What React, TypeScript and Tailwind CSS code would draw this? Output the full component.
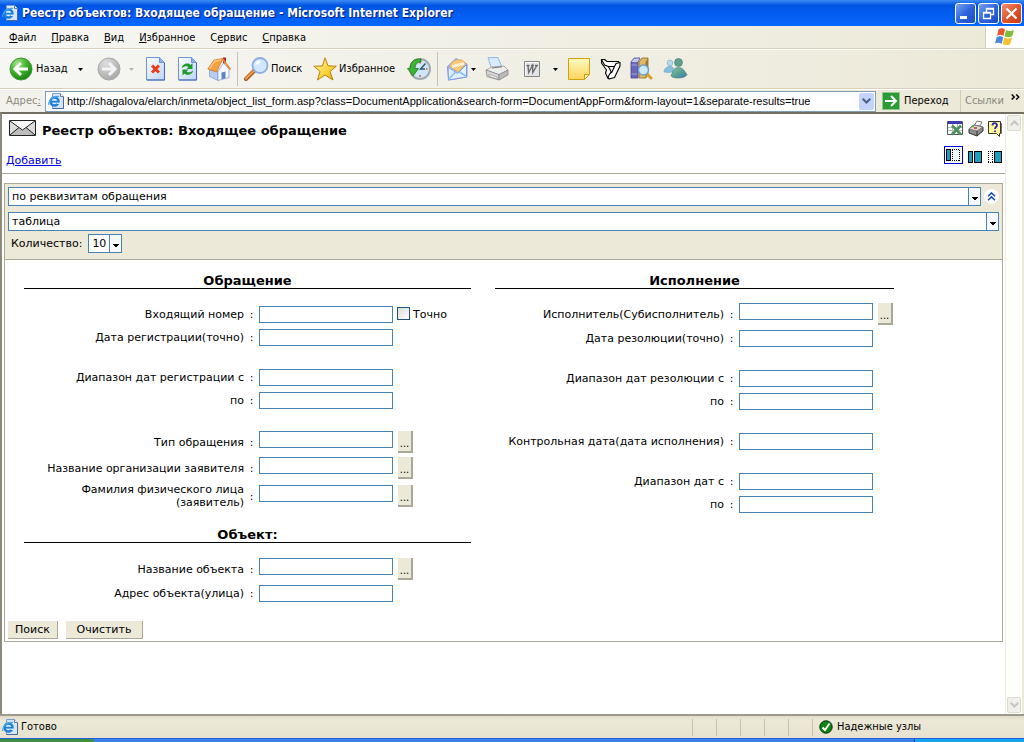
import React, { useState } from "react";

const tahoma = "font-['DejaVu_Sans_Condensed','DejaVu_Sans',sans-serif] text-[11px] leading-[14px]";
const verdana = "font-['DejaVu_Sans',sans-serif] text-[11px] leading-[13px]";

function Caret({ muted = false }: { muted?: boolean }) {
  return (
    <svg width="5" height="3" viewBox="0 0 5 3" className={muted ? "shrink-0 text-[#b9b7ab]" : "shrink-0 text-black"} aria-hidden="true">
      <path d="M0 0h5L2.500 3z" fill="currentColor" />
    </svg>
  );
}

function PageIcon() {
  return (
    <svg width="16" height="16" viewBox="0 0 16 16" className="shrink-0" aria-hidden="true">
      <path d="M4.500.5h8l3 3v12h-11z" fill="#d5e6fb" stroke="#7c9fd0" />
      <path d="M12.500.5v3h3" fill="#fff" stroke="#5b7fb5" />
      <path d="M15.500 4v11.500h-11" fill="none" stroke="#4a66a0" />
      <circle cx="6.500" cy="8.500" r="4" fill="#d8efff" stroke="#1d7fd6" strokeWidth="2.400" />
      <path d="M3 8.700h8" stroke="#1d7fd6" strokeWidth="1.800" />
      <path d="M9 10.300h3" stroke="#d5e6fb" strokeWidth="1.400" />
      <path d="M1 12C-.5 9 4 3 11 3.500" fill="none" stroke="#4aa5ea" strokeWidth="1.200" />
    </svg>
  );
}

function BackIcon() {
  return (
    <svg width="24" height="24" viewBox="0 0 24 24" aria-hidden="true">
      <defs>
        <radialGradient id="gback" cx=".35" cy=".25" r=".85">
          <stop offset="0" stopColor="#a4e58c" />
          <stop offset=".5" stopColor="#3fb02a" />
          <stop offset="1" stopColor="#15780e" />
        </radialGradient>
      </defs>
      <circle cx="12" cy="12" r="11" fill="url(#gback)" stroke="#3f9b35" />
      <path d="M19 12H6.500M12 6l-6 6 6 6" fill="none" stroke="#fff" strokeWidth="3" />
    </svg>
  );
}

function ForwardIcon() {
  return (
    <svg width="24" height="24" viewBox="0 0 24 24" aria-hidden="true">
      <defs>
        <radialGradient id="gfwd" cx=".35" cy=".25" r=".85">
          <stop offset="0" stopColor="#dedede" />
          <stop offset="1" stopColor="#a3a3a3" />
        </radialGradient>
      </defs>
      <circle cx="12" cy="12" r="11" fill="url(#gfwd)" stroke="#a9a9a9" />
      <path d="M5 12h12.500M12 6l6 6-6 6" fill="none" stroke="#f4f4f4" strokeWidth="3" />
    </svg>
  );
}

function Sheet({ children }: { children: React.ReactNode }) {
  return (
    <svg width="20" height="24" viewBox="0 0 20 24" aria-hidden="true">
      <defs>
        <linearGradient id="gsheet" x1="0" y1="0" x2="1" y2="1">
          <stop offset="0" stopColor="#fff" />
          <stop offset="1" stopColor="#bcd3f8" />
        </linearGradient>
      </defs>
      <path d="M.5.5h13l5 5v17.500H.5z" fill="url(#gsheet)" stroke="#6f93d6" />
      <path d="M13.500.5v5h5" fill="#8bb0ee" stroke="#6f93d6" />
      <path d="M18.500 6v17H1" fill="none" stroke="#4468b4" />
      {children}
    </svg>
  );
}

function HomeIcon() {
  return (
    <svg width="24" height="24" viewBox="0 0 24 24" aria-hidden="true">
      <path d="M16 .5h3v6h-3z" fill="#b5222c" />
      <path d="M2.500 12.500l8.500 2V23.500l-8.500-4z" fill="#b9cdf0" stroke="#7c98cc" strokeWidth=".7" />
      <path d="M11 14.500L16.500 6l5.500 6v8.500l-11 3z" fill="#f5f9ff" stroke="#7c98cc" strokeWidth=".7" />
      <path d="M14.500 15.500l4-1v6.800l-4 1z" fill="#5b82c4" />
      <path d="M.8 12L7 3l9-1.500L9.500 15z" fill="#f6a040" stroke="#ce6f1c" strokeWidth=".7" />
      <path d="M2.500 11.500L8 4l6-1" fill="none" stroke="#fbc885" strokeWidth="1.500" />
      <path d="M16 2.500l7 9.500" stroke="#e88a3a" strokeWidth="1.800" strokeLinecap="round" />
    </svg>
  );
}

function SearchIcon() {
  return (
    <svg width="25" height="24" viewBox="0 0 25 24" aria-hidden="true">
      <path d="M2 22l8-8" stroke="#9b5b22" strokeWidth="4" strokeLinecap="round" />
      <path d="M2 21.500l7-7" stroke="#f49b4a" strokeWidth="2.200" strokeLinecap="round" />
      <circle cx="16" cy="8.500" r="7.500" fill="#cfe8ff" stroke="#8fabe6" strokeWidth="1.800" />
      <path d="M11 8a5.500 5.500 0 0 1 6-4.500c-1 3-3 4-6 4.500z" fill="#fff" />
    </svg>
  );
}

function StarIcon() {
  return (
    <svg width="24" height="24" viewBox="0 0 24 24" aria-hidden="true">
      <defs>
        <linearGradient id="gstar" x1="0" y1="0" x2="1" y2="1">
          <stop offset="0" stopColor="#fff6a8" />
          <stop offset=".6" stopColor="#fbd23a" />
          <stop offset="1" stopColor="#e2a010" />
        </linearGradient>
      </defs>
      <path d="M12 .8l3 8 8.300.4-6.300 5.300 3 8.500L12 18l-7.500 5L7 14.500.8 9.200 9.300 9z" fill="url(#gstar)" stroke="#b98410" strokeLinejoin="round" />
    </svg>
  );
}

function HistoryIcon() {
  return (
    <svg width="24" height="24" viewBox="0 0 24 24" aria-hidden="true">
      <circle cx="13" cy="12" r="10" fill="#cfe6f8" stroke="#a2a8b0" strokeWidth="2" />
      <path d="M13 5v1.500M13 18v2M20.500 12H19" stroke="#e05a30" strokeWidth="1.500" />
      <path d="M18.500 6.500L13.500 12H18" fill="none" stroke="#35557f" strokeWidth="1.400" />
      <path d="M14 2C7 1.500 3 5 3.500 11L.5 11.500 6 19l5.500-7.500H8C8 7.500 10 5 14 5z" fill="#3db336" stroke="#1c7a18" strokeWidth=".8" />
    </svg>
  );
}

function MailIcon() {
  return (
    <svg width="24" height="24" viewBox="0 0 24 24" aria-hidden="true">
      <path d="M1.500 9.500L10 1.500l11 5.500v13L2.500 23z" fill="#a9c6f5" stroke="#8f9fdc" />
      <path d="M4 9.500C5 2 18 0 19.500 7l-7.500 8z" fill="#fbc877" stroke="#e0a860" strokeWidth=".8" />
      <path d="M6 9.500l12-3" stroke="#fff3dc" strokeWidth="2.500" />
      <path d="M2 10l9.500 6.500 9-9V20L2.500 23z" fill="#dff1ff" stroke="#7f9ae0" />
      <path d="M2.500 22.500l7-7.500M20.500 19.500L13.500 15" stroke="#84c0ee" strokeWidth="1.500" />
    </svg>
  );
}

function PrinterIcon() {
  return (
    <svg width="24" height="24" viewBox="0 0 24 24" aria-hidden="true">
      <path d="M3 .7l10-.2 4 10-10 2z" fill="#d9eaff" stroke="#8fb4ea" />
      <path d="M1 13l6-3 12-1 4 4-9 5z" fill="#eeeeee" stroke="#999" strokeWidth=".8" />
      <path d="M1 13l13 4.500V23L2 19.500z" fill="#d5d5d5" stroke="#888" strokeWidth=".8" />
      <path d="M14 17.500l9-4.500v5l-9 5z" fill="#b9b9b9" stroke="#888" strokeWidth=".8" />
      <path d="M4 17.500l8 2.500v1.800l-8-2.500z" fill="#fff" stroke="#777" strokeWidth=".5" />
      <path d="M7 11l10-1.200" stroke="#777" />
    </svg>
  );
}

function WordIcon() {
  return (
    <svg width="16" height="16" viewBox="0 0 16 16" aria-hidden="true">
      <path d="M.5.5h15v15H.5z" fill="#e4e4e4" stroke="#858585" />
      <path d="M1.500 14.500v-13h13" fill="none" stroke="#fff" />
      <path d="M2.500 4.500h3M7 4.500h3M11 4.500h3M4 4.500l.7 7 3.800-7 .3 7L12.800 4.500" fill="none" stroke="#6d6d6d" strokeWidth="1.400" />
    </svg>
  );
}

function NoteIcon() {
  return (
    <svg width="22" height="22" viewBox="0 0 22 22" aria-hidden="true">
      <defs>
        <linearGradient id="gnote" x1="0" y1="0" x2="0" y2="1">
          <stop offset="0" stopColor="#fffbc0" />
          <stop offset="1" stopColor="#ffd35c" />
        </linearGradient>
      </defs>
      <path d="M.5.5h21v16l-5 5H.5z" fill="url(#gnote)" stroke="#d2a010" />
      <path d="M21.500 16.500h-5v5z" fill="#fff0a0" stroke="#d2a010" />
    </svg>
  );
}

function TrackIcon() {
  return (
    <svg width="22" height="22" viewBox="0 0 22 22" aria-hidden="true" strokeLinejoin="round">
      <path d="M1.500 1.500h3L6 4l5 9.500-1 5.500-2 1.500L5.500 15l1-3L1.500 5z" fill="#fff" stroke="#000" strokeWidth="1.100" />
      <path d="M1.500 1.500h3L7 3.500h11.500l1 2-2 3H8.500L4.500 7z" fill="#fff" stroke="#000" strokeWidth="1.100" />
      <path d="M16 5.500l4-1v3.500L14.500 19.500 9 21l-1-2 2-3.500 2-1.500 2.500-5.500z" fill="#fff" stroke="#000" strokeWidth="1.100" />
    </svg>
  );
}

function BooksIcon() {
  return (
    <svg width="23" height="24" viewBox="0 0 23 24" aria-hidden="true">
      <path d="M1 5l3-4h6L8 5v16H1z" fill="#6a68b8" stroke="#45438c" strokeWidth=".8" />
      <path d="M1.500 5L4 1.500h5.500L7.500 5z" fill="#c9c8ec" />
      <path d="M1.500 8h6M1.500 17h6" stroke="#a6a4dc" />
      <path d="M9 5l3-4h6v17l-2 3H9z" fill="#e0b863" stroke="#8d6a20" strokeWidth=".8" />
      <path d="M15.500 5L18 1.500V17l-2.500 3z" fill="#9c7633" />
      <path d="M16.500 16.500l4.500 4.500" stroke="#d8a030" strokeWidth="3" strokeLinecap="round" />
      <circle cx="13.500" cy="13" r="5" fill="#cfeaff" stroke="#6f9fd4" strokeWidth="1.400" />
    </svg>
  );
}

function MessengerIcon() {
  return (
    <svg width="25" height="24" viewBox="0 0 25 24" aria-hidden="true">
      <defs>
        <linearGradient id="gmsn" x1="0" y1="0" x2="1" y2="1">
          <stop offset="0" stopColor="#8cc3a6" />
          <stop offset=".5" stopColor="#5aa392" />
          <stop offset="1" stopColor="#3f78b8" />
        </linearGradient>
      </defs>
      <circle cx="7" cy="6" r="2.800" fill="#b4dcee" stroke="#6aa3c0" strokeWidth=".6" />
      <path d="M1 15c0-3.500 3-5.500 6-5.500s4 2 4 5L6 15.500z" fill="#86bfe0" stroke="#6aa3c0" strokeWidth=".6" />
      <circle cx="15.500" cy="5.500" r="4" fill="#5f9f8c" stroke="#467f6c" strokeWidth=".6" />
      <path d="M8 18.500C9.500 17 9.500 10.500 15.500 10.500c5 0 6 4 8.500 7-1 2.500-5 3.500-8.500 3.500-3 0-7-.5-7.500-2.500z" fill="url(#gmsn)" stroke="#3f7d74" strokeWidth=".6" />
    </svg>
  );
}

function FlagLogo() {
  return (
    <svg width="20" height="18" viewBox="0 0 20 18" aria-hidden="true">
      <path d="M3.500 1.500C6-.3 8 .3 10 1.500L8.500 8C6.500 6.500 4.500 6.500 2 7.800z" fill="#e8562a" />
      <path d="M11 2c2.500 1.200 5 1.300 8 0l-1.800 6.300c-2.800 1.500-5 1.200-7.700 0z" fill="#7cbb3c" />
      <path d="M1.700 9c2.600-1.200 4.600-1 6.600.3L6.700 15.800C4.700 14.500 2.500 14.500 0 15.500z" fill="#4a86dc" />
      <path d="M9.300 9.500c2.700 1.300 5 1.300 7.700 0l-1.800 6.700c-2.700 1.300-5 1.200-7.500-.2z" fill="#f5c02c" />
    </svg>
  );
}

function ToolButton({ label, className, children }: { label: string; className: string; children: React.ReactNode }) {
  return (
    <button type="button" aria-label={label} className={"flex h-full shrink-0 items-center " + className}>
      {children}
    </button>
  );
}

function MenuItem({ text, mark = 0 }: { text: string; mark?: number }) {
  return (
    <button type="button" className="pt-px pr-2 pl-[7px]">
      {text.slice(0, mark)}
      <u>{text[mark]}</u>
      {text.slice(mark + 1)}
    </button>
  );
}

function Combo({ label, id, options, className }: { label: string; id: string; options: string[]; className: string }) {
  return (
    <div className={"grid h-[19px] border border-[#4682b4] bg-white " + className}>
      <select id={id} aria-label={label} className="col-start-1 row-start-1 w-full min-w-0 appearance-none bg-white pl-[3px] outline-none">
        {options.map((o) => (
          <option key={o}>{o}</option>
        ))}
      </select>
      <span className="pointer-events-none col-start-1 row-start-1 flex w-3 items-center justify-center justify-self-end border-l border-[#4682b4] bg-[#f8f8ff] pt-1">
        <svg width="6" height="3" viewBox="0 0 6 3" aria-hidden="true">
          <path d="M0 0h6v1H5v1H4v1H2V2H1V1H0z" />
        </svg>
      </span>
    </div>
  );
}

type FieldProps = { id: string; label: React.ReactNode; lookup?: boolean; tall?: boolean; narrow?: boolean; children?: React.ReactNode };

function Field({ id, label, lookup, tall, narrow, children }: FieldProps) {
  const height = tall ? "h-[30px]" : lookup ? "h-[26px]" : "h-[23px]";
  return (
    <div className={"flex items-center " + height}>
      <label htmlFor={id} className="flex-1 text-right">
        {label}
      </label>
      <span className="w-[15px] text-center">:</span>
      <div className={"flex items-start " + (narrow ? "w-[155px]" : "w-[212px]")}>
        <input id={id} type="text" className="h-[17px] w-[134px] border border-[#4682b4] bg-white px-1 outline-none" />
        {lookup && (
          <button type="button" aria-label="Выбрать" className="ml-[5px] h-[22px] w-[15px] border-r-2 border-b-2 border-[#aca899] bg-[#ece9d8] pt-1 text-[10px]">
            ...
          </button>
        )}
        {children}
      </div>
    </div>
  );
}

function Section({ title, children }: { title: string; children: React.ReactNode }) {
  return (
    <section>
      <h2 className="border-b border-black text-center text-[13px] leading-[15px] font-bold">{title}</h2>
      {children}
    </section>
  );
}

function TopIcons() {
  return (
    <div className="flex flex-col items-end gap-[9px] pt-[6px] pr-[2px]">
      <div className="flex gap-1">
        <button type="button" aria-label="Excel">
          <svg width="17" height="17" viewBox="0 0 17 17" aria-hidden="true">
            <path d="M.5 1.500h15v13H.5z" fill="#fff" stroke="#555" />
            <path d="M1 1h14v3H1z" fill="#3b3bb0" />
            <path d="M1 7.500h14M1 10.500h14M5.500 4v10M10.500 4v10" stroke="#b4c0b4" />
            <path d="M5 5.500l9 9M14 5.500l-9 9" stroke="#4e9160" strokeWidth="2.600" />
          </svg>
        </button>
        <button type="button" aria-label="Печать">
          <svg width="16" height="17" viewBox="0 0 16 17" aria-hidden="true">
            <path d="M6 6l3-5 5 1-3 6z" fill="#fff" stroke="#777" />
            <path d="M1 9l5-4 9 2v4l-6 5-8-3z" fill="#8c8c8c" stroke="#333" />
            <path d="M1 9l5-4 9 2-6 4z" fill="#dcdcdc" stroke="#777" />
            <path d="M9 11v5" stroke="#333" />
            <path d="M6 8h3" stroke="#d22" strokeWidth="1.500" />
            <path d="M4 6.500h2" stroke="#2c2" strokeWidth="1.500" />
          </svg>
        </button>
        <button type="button" aria-label="Справка">
          <svg width="15" height="17" viewBox="0 0 15 17" aria-hidden="true">
            <path d="M13.500 3v10.500h-1" fill="none" stroke="#777" />
            <path d="M.5 1.500h12v12h-1v3l-3-3h-8z" fill="#fff99a" stroke="#333" />
            <path d="M4.500 5.500C4.500 2.500 9 2.500 9 5.300c0 1.700-2 1.700-2 3.700M7 10.500v1.500" fill="none" stroke="#2626b8" strokeWidth="1.800" />
          </svg>
        </button>
      </div>
      <div className="flex items-end gap-[5px]">
        <button type="button" aria-label="Только форма" className="border border-[#0000e0] p-px">
          <svg width="15" height="14" viewBox="0 0 15 14" shapeRendering="crispEdges" aria-hidden="true">
            <path d="M0 0h15v14H0z" fill="#eef6fc" />
            <path d="M.5 1.500h4v11h-4z" fill="#1ca0c0" stroke="#000" />
            <path d="M6 1.500h8M6 12.500h8M6.500 2v11M13.500 2v11" fill="none" stroke="#000" strokeDasharray="1 1" />
          </svg>
        </button>
        <button type="button" aria-label="Форма и результаты" className="pb-px">
          <svg width="15" height="12" viewBox="0 0 15 12" shapeRendering="crispEdges" aria-hidden="true">
            <path d="M.5.5h4v11h-4zM6.500.5h7v11h-7z" fill="#1ca0c0" stroke="#000" />
          </svg>
        </button>
        <button type="button" aria-label="Только результаты" className="pb-px">
          <svg width="15" height="12" viewBox="0 0 15 12" shapeRendering="crispEdges" aria-hidden="true">
            <path d="M0 .5h5M0 11.500h5M.5 0v12M4.500 0v12" fill="none" stroke="#000" strokeDasharray="1 1" />
            <path d="M6.500.5h7v11h-7z" fill="#1ca0c0" stroke="#000" />
          </svg>
        </button>
      </div>
    </div>
  );
}

function ScrollButton({ up = false }: { up?: boolean }) {
  return (
    <button type="button" aria-label={up ? "Вверх" : "Вниз"} className="flex h-4 w-full items-center justify-center rounded-[2px] border border-[#dcdccd] bg-[#f0f0ea]">
      <svg width="9" height="6" viewBox="0 0 9 6" aria-hidden="true">
        <path d={up ? "M.7 5.300L4.500 1.500l3.800 3.800" : "M.7.7l3.800 3.800L8.300.7"} fill="none" stroke="#c6c6bb" strokeWidth="2" />
      </svg>
    </button>
  );
}

function WindowButton({ label, close, children }: { label: string; close?: boolean; children: React.ReactNode }) {
  return (
    <button
      type="button"
      aria-label={label}
      className={
        "flex h-[21px] w-[21px] items-center justify-center rounded-[3px] border border-white bg-linear-to-br " +
        (close ? "from-[#f0906e] via-[#e0532c] to-[#c83a14]" : "from-[#7ba2f0] via-[#2f63dc] to-[#1c4cc4]")
      }
    >
      {children}
    </button>
  );
}

export default function App() {
  const [exact, setExact] = useState(false);
  return (
    <div className={"flex h-screen flex-col overflow-hidden bg-[#ece9d8] text-black " + tahoma}>
      <header className="flex h-[26px] shrink-0 items-center bg-linear-to-b from-[#3a8cf5] via-[#0054e3] via-20% to-[#0668ff] pr-[2px] pl-[2px]">
        <PageIcon />
        <h1 className="flex-1 truncate pl-1 text-[12px] leading-5 font-bold text-white [text-shadow:1px_1px_1px_#0a1883]">
          Реестр объектов: Входящее обращение - Microsoft Internet Explorer
        </h1>
        <div className="flex gap-[2px]">
          <WindowButton label="Свернуть">
            <svg width="13" height="13" viewBox="0 0 13 13" aria-hidden="true">
              <path d="M1 9h7v3H1z" fill="#fff" />
            </svg>
          </WindowButton>
          <WindowButton label="Восстановить">
            <svg width="13" height="13" viewBox="0 0 13 13" aria-hidden="true">
              <path d="M4.500 5V1.500h7v6H9M4 2h8M1.500 5.500h7v6h-7zM1 6h8" fill="none" stroke="#fff" strokeWidth="1.300" />
            </svg>
          </WindowButton>
          <WindowButton label="Закрыть" close>
            <svg width="13" height="13" viewBox="0 0 13 13" aria-hidden="true">
              <path d="M1.500 1.500l10 10M11.500 1.500l-10 10" stroke="#fff" strokeWidth="2.200" />
            </svg>
          </WindowButton>
        </div>
      </header>

      <nav className="flex h-[23px] shrink-0 items-stretch border-b border-[#d8d2bd] bg-linear-to-r from-[#f6f6f3] to-[#ece9d8] pl-[2px]">
        <MenuItem text="Файл" />
        <MenuItem text="Правка" />
        <MenuItem text="Вид" />
        <MenuItem text="Избранное" />
        <MenuItem text="Сервис" mark={1} />
        <MenuItem text="Справка" />
        <div className="ml-auto flex w-[39px] items-center justify-center border-l border-[#d8d2bd] bg-white">
          <FlagLogo />
        </div>
      </nav>

      <div className="flex h-10 shrink-0 items-center border-t border-b border-t-white border-b-[#d8d2bd] bg-linear-to-r from-[#f6f6f3] to-[#ece9d8] pl-[9px]" role="toolbar">
        <ToolButton label="Назад" className="w-[88px]">
          <BackIcon />
          <span className="w-[45px] pl-[3px] text-left">Назад</span>
          <Caret />
        </ToolButton>
        <ToolButton label="Вперед" className="w-[49px] gap-2">
          <ForwardIcon />
          <Caret muted />
        </ToolButton>
        <ToolButton label="Остановить" className="w-8">
          <Sheet>
            <path d="M6 8.500l7 7M13 8.500l-7 7" stroke="#ee3b1c" strokeWidth="3" />
          </Sheet>
        </ToolButton>
        <ToolButton label="Обновить" className="w-[29px]">
          <Sheet>
            <path d="M4 11c0-4 6-6 8.500-3l2-2v6H8.500l2-2C9 8.500 6.500 9 4 11zM15 13.500c0 4-6 5.500-8.500 3l-2 2v-6h6l-2 2c1.500 1.500 4.500 1 6.500-1z" fill="#1e9a2a" />
          </Sheet>
        </ToolButton>
        <ToolButton label="Домой" className="w-[30px]">
          <HomeIcon />
        </ToolButton>
        <div className="h-[34px] w-[7px] shrink-0 border-l border-[#c5c2b2]" />
        <ToolButton label="Поиск" className="w-[69px] gap-[2px]">
          <SearchIcon />
          <span>Поиск</span>
        </ToolButton>
        <ToolButton label="Избранное" className="w-[94px] gap-[2px]">
          <StarIcon />
          <span>Избранное</span>
        </ToolButton>
        <ToolButton label="Журнал" className="w-[30px]">
          <HistoryIcon />
        </ToolButton>
        <div className="h-[34px] w-[9px] shrink-0 border-l border-[#c5c2b2]" />
        <ToolButton label="Почта" className="w-[39px] gap-px">
          <MailIcon />
          <Caret />
        </ToolButton>
        <ToolButton label="Печать" className="w-[39px]">
          <PrinterIcon />
        </ToolButton>
        <ToolButton label="Правка" className="w-11 gap-[13px]">
          <WordIcon />
          <Caret />
        </ToolButton>
        <ToolButton label="Заметки" className="w-8">
          <NoteIcon />
        </ToolButton>
        <ToolButton label="Маршрут" className="w-[30px]">
          <TrackIcon />
        </ToolButton>
        <ToolButton label="Справочники" className="w-[33px]">
          <BooksIcon />
        </ToolButton>
        <ToolButton label="Messenger" className="w-8">
          <MessengerIcon />
        </ToolButton>
      </div>

      <div className="flex h-[23px] shrink-0 items-center border-t border-white bg-linear-to-r from-[#f3f2ec] to-[#ece9d8]">
        <label htmlFor="address" className="w-[45px] shrink-0 pl-[6px] text-[#8a887c]">
          Адрес<u>:</u>
        </label>
        <div className="flex h-[21px] min-w-0 flex-1 items-center border border-[#7f9db9] bg-white pl-[2px]">
          <PageIcon />
          <input
            id="address"
            type="text"
            className="h-full min-w-0 flex-1 truncate bg-white pl-[3px] font-['Liberation_Sans',sans-serif] text-[11px] outline-none"
            defaultValue="http://shagalova/elarch/inmeta/object_list_form.asp?class=DocumentApplication&search-form=DocumentAppForm&form-layout=1&separate-results=true"
          />
          <button type="button" aria-label="Показать адреса" className="mr-px flex h-[17px] w-[15px] items-center justify-center rounded-[2px] bg-[#c3d3fb]">
            <svg width="9" height="6" viewBox="0 0 9 6" aria-hidden="true">
              <path d="M.7.7l3.800 3.800L8.300.7" fill="none" stroke="#4d6185" strokeWidth="2" />
            </svg>
          </button>
        </div>
        <button type="button" className="ml-[6px] flex w-[78px] shrink-0 items-center gap-1">
          <svg width="18" height="18" viewBox="0 0 18 18" aria-hidden="true">
            <path d="M.5.5h17v17H.5z" fill="#2c9a35" stroke="#8fc892" />
            <path d="M3 9h11M9 4l5 5-5 5" fill="none" stroke="#fff" strokeWidth="2" />
          </svg>
          Переход
        </button>
        <div className="flex h-full w-[64px] shrink-0 items-center justify-between border-l border-[#d0ccbc] pr-1 pl-1 text-[#8a887c]">
          <span>Ссылки</span>
          <svg width="9" height="6" viewBox="0 0 9 6" className="mb-2" aria-hidden="true">
            <path d="M.7.5L3.200 3 .7 5.500M5.200.5L7.700 3 5.200 5.500" fill="none" stroke="#000" strokeWidth="1.500" />
          </svg>
        </div>
      </div>

      <div className={"flex min-h-0 flex-1 border-t-2 border-l-2 border-t-[#716f64] border-l-[#8d8a7c] bg-white " + verdana}>
        <main className="min-w-0 flex-1 overflow-hidden">
          <div className="flex h-[60px] justify-between border-b border-[#aca899]">
            <div className="pl-1">
              <div className="flex h-8 items-center gap-[6px] pl-[3px]">
                <svg width="27" height="16" viewBox="0 0 27 16" className="mb-1" aria-hidden="true">
                  <path d="M.5.5h26v15H.5z" fill="#dcdcdc" />
                  <path d="M1 15l9-8 3.500 3L17 7l9 8z" fill="#bdbdbd" />
                  <path d="M1 1h25L13.500 10z" fill="#f7f7f7" />
                  <path d="M.5.5h26v15H.5zM1 1l12.500 9L26 1M1 15l9-7.500M26 15l-9-7.500" fill="none" stroke="#222" />
                </svg>
                <h2 className="pt-[2px] text-[13px] leading-4 font-bold">Реестр объектов: Входящее обращение</h2>
              </div>
              <a href="#add" className="mt-2 block text-[#0000e0] underline">
                Добавить
              </a>
            </div>
            <TopIcons />
          </div>

          <form className="mx-[2px] mt-[9px] mb-0 border border-[#aca899]" onSubmit={(e) => e.preventDefault()}>
            <div className="flex h-[76px] flex-col border-b border-[#aca899] bg-[#ece9d8] pt-[3px] pr-[3px] pl-[3px]">
              <div className="flex items-center">
                <Combo id="mode" label="Вид поиска" className="flex-1" options={["по реквизитам обращения"]} />
                <button type="button" aria-label="Свернуть" className="ml-[3px] flex h-[15px] w-[15px] items-center justify-center rounded-full bg-white">
                  <svg width="9" height="9" viewBox="0 0 9 9" aria-hidden="true">
                    <path d="M1 4.200L4.500.9 8 4.200M1 8.200l3.500-3.300L8 8.200" fill="none" stroke="#1548b8" strokeWidth="1.500" />
                  </svg>
                </button>
              </div>
              <Combo id="view" label="Представление" className="mt-[6px]" options={["таблица"]} />
              <div className="mt-[3px] flex items-center gap-[6px] pl-[3px]">
                <label htmlFor="count">Количество:</label>
                <Combo id="count" label="Количество" className="w-[34px]" options={["10", "20", "50"]} />
              </div>
            </div>

            <div className="flex gap-6 pt-[13px] pl-[19px]">
              <div className="w-[447px] shrink-0">
                <Section title="Обращение">
                  <div className="flex flex-col gap-[17px] pt-[14px]">
                    <div>
                      <Field id="num" label="Входящий номер">
                        <label className="ml-1 flex items-center gap-[3px]">
                          <input
                            type="checkbox"
                            checked={exact}
                            onChange={(e) => setExact(e.target.checked)}
                            className="h-[13px] w-[13px] appearance-none border border-[#1c5180] bg-linear-to-br from-[#dcdcd7] to-white checked:bg-[#21a121]"
                          />
                          <span className="pt-[2px]">Точно</span>
                        </label>
                      </Field>
                      <Field id="regdate" label="Дата регистрации(точно)" />
                    </div>
                    <div>
                      <Field id="regfrom" label="Диапазон дат регистрации с" />
                      <Field id="regto" label="по" />
                    </div>
                    <div>
                      <Field id="type" label="Тип обращения" lookup />
                      <Field id="org" label="Название организации заявителя" lookup />
                      <Field
                        id="person"
                        lookup
                        tall
                        label={
                          <>
                            Фамилия физического лица
                            <br />
                            (заявитель)
                          </>
                        }
                      />
                    </div>
                  </div>
                </Section>
                <div className="pt-4">
                  <Section title="Объект:">
                    <div className="pt-[13px]">
                      <Field id="objname" label="Название объекта" lookup />
                      <Field id="objaddr" label="Адрес объекта(улица)" />
                    </div>
                  </Section>
                </div>
              </div>
              <div className="w-[399px] shrink-0">
                <Section title="Исполнение">
                  <div className="flex flex-col gap-[17px] pt-3">
                    <div>
                      <Field id="executor" label="Исполнитель(Субисполнитель)" lookup narrow />
                      <Field id="resdate" label="Дата резолюции(точно)" narrow />
                    </div>
                    <div>
                      <Field id="resfrom" label="Диапазон дат резолюции с" narrow />
                      <Field id="resto" label="по" narrow />
                    </div>
                    <Field id="control" label="Контрольная дата(дата исполнения)" narrow />
                    <div>
                      <Field id="from" label="Диапазон дат с" narrow />
                      <Field id="to" label="по" narrow />
                    </div>
                  </div>
                </Section>
              </div>
            </div>

            <div className="flex gap-2 pt-4 pb-[2px] pl-[3px]">
              <button type="submit" className="h-[18px] w-[50px] border-r border-b border-[#aca899] bg-[#ece9d8]">
                Поиск
              </button>
              <button type="reset" className="h-[18px] w-[77px] border-r border-b border-[#aca899] bg-[#ece9d8]">
                Очистить
              </button>
            </div>
          </form>
        </main>
        <div className="flex w-[17px] shrink-0 flex-col justify-between border-l border-[#eeede5] bg-[#fefefb] p-px">
          <ScrollButton up />
          <ScrollButton />
        </div>
        <div className="w-[2px] shrink-0 bg-[#ece9d8]" />
      </div>

      <footer className="flex h-6 shrink-0 items-center border-t-2 border-[#9d9a8c] bg-linear-to-b from-[#dedbc9] via-[#ece9d8] via-20% to-[#e6e2cf] pl-[2px]">
        <PageIcon />
        <span className="flex-1 pl-[3px]">Готово</span>
        {[0, 1, 2, 3, 4].map((n) => (
          <span key={n} className="h-[17px] w-6 border-l border-[#c5c2b2]" />
        ))}
        <div className="flex h-[17px] w-[212px] items-center gap-1 border-l border-[#c5c2b2] pl-[6px]">
          <svg width="14" height="14" viewBox="0 0 14 14" aria-hidden="true">
            <circle cx="7" cy="7" r="6.200" fill="#0b860f" stroke="#0c2c0c" />
            <path d="M3.500 7.500L6 10l4.500-6.500" fill="none" stroke="#fff" strokeWidth="2" />
          </svg>
          Надежные узлы
        </div>
      </footer>
      <div className="flex h-1 shrink-0 border-t border-[#245edb] bg-[#3a80e8]">
        <span className="w-[94px] rounded-tr-sm bg-[#3c8f3c]" />
        <span className="ml-auto w-[110px] border-l border-[#0a4a90] bg-[#12a6ee]" />
      </div>
    </div>
  );
}
